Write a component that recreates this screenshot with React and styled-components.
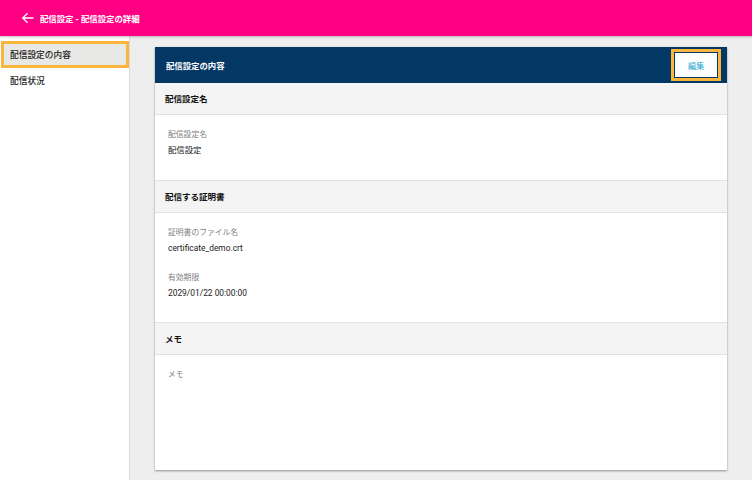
import React from "react";
import styled, { createGlobalStyle } from "styled-components";

const GlobalStyle = createGlobalStyle`
  html, body {
    margin: 0;
    padding: 0;
    height: 100%;
    overflow: hidden;
    background: #eeeeee;
    font-family: Roboto, "Noto Sans CJK JP", sans-serif;
  }
`;

const Page = styled.div`
  width: 752px;
  height: 480px;
  display: flex;
  flex-direction: column;
  overflow: hidden;
`;

const Header = styled.header`
  height: 36px;
  flex: none;
  box-sizing: border-box;
  display: flex;
  align-items: center;
  gap: 5px;
  padding: 0 0 1px 21px;
  background: #ff0084;
  box-shadow: 0 1px 2px rgba(0, 0, 0, 0.25);
  position: relative;
  color: #fff;
  font-size: 8.4px;
  font-weight: 700;
`;

const Body = styled.div`
  flex: 1;
  display: flex;
  min-height: 0;
`;

const Sidebar = styled.nav`
  width: 130px;
  flex: none;
  box-sizing: border-box;
  padding: 5px 0 0 1px;
  background: #fff;
  border-right: 1px solid #d9d9d9;
`;

const NavItem = styled.div`
  height: ${(p) => (p.$active ? "27px" : "25px")};
  box-sizing: border-box;
  display: flex;
  align-items: center;
  padding: 0 0 1px ${(p) => (p.$active ? "6px" : "9px")};
  font-size: 8.7px;
  font-weight: 500;
  color: #222;
  background: ${(p) => (p.$active ? "#e8e8e6" : "transparent")};
  border: ${(p) => (p.$active ? "3px solid #f9b53c" : "none")};
`;

const Main = styled.main`
  flex: 1;
  padding: 11px 25px 10px;
  min-width: 0;
`;

const Card = styled.div`
  height: 423px;
  display: flex;
  flex-direction: column;
  background: #fff;
  box-shadow: 0 1px 2px rgba(0, 0, 0, 0.4);
`;

const CardTitle = styled.div`
  height: 36px;
  flex: none;
  box-sizing: border-box;
  display: flex;
  align-items: center;
  justify-content: space-between;
  padding: 0 9px 0 11px;
  background: #033764;
  color: #fff;
  font-size: 8.4px;
  font-weight: 700;
`;

const EditButton = styled.button`
  width: 44px;
  height: 26px;
  box-sizing: border-box;
  padding: 0;
  background: #fff;
  border: 1px solid #033764;
  outline: 3px solid #f9b53c;
  color: #26a9d0;
  font-family: inherit;
  font-size: 8.4px;
`;

const SectionHeader = styled.div`
  height: 32px;
  flex: none;
  box-sizing: border-box;
  display: flex;
  align-items: center;
  padding: 0 0 2px 10px;
  background: #f4f4f4;
  border-bottom: 1px solid #e2e2e2;
  font-size: 8.5px;
  font-weight: 700;
  color: #111;
`;

const SectionBody = styled.div`
  height: ${(p) => p.$height}px;
  flex: none;
  box-sizing: border-box;
  padding: 14px 13px 0;
  border-bottom: 1px solid #e2e2e2;
  display: flex;
  flex-direction: column;
  gap: 18px;

  &:last-child {
    flex: 1;
    border-bottom: none;
  }
`;

const Field = styled.div`
  display: flex;
  flex-direction: column;
  gap: 5px;
`;

const Label = styled.div`
  font-size: 7.8px;
  line-height: 11px;
  color: #808080;
`;

const Value = styled.div`
  font-size: 8.4px;
  line-height: 11px;
  color: #222;
`;

const BackIcon = () => (
  <svg width="14" height="14" viewBox="0 0 14 14" fill="none" stroke="#fff" strokeWidth="1.4">
    <path d="M12.5 7H2M6.5 2.2 1.8 7l4.7 4.8" />
  </svg>
);

export default function App() {
  return (
    <Page>
      <GlobalStyle />
      <Header>
        <BackIcon />
        配信設定 - 配信設定の詳細
      </Header>
      <Body>
        <Sidebar>
          <NavItem $active>配信設定の内容</NavItem>
          <NavItem>配信状況</NavItem>
        </Sidebar>
        <Main>
          <Card>
            <CardTitle>
              配信設定の内容
              <EditButton>編集</EditButton>
            </CardTitle>
            <SectionHeader>配信設定名</SectionHeader>
            <SectionBody $height={66}>
              <Field>
                <Label>配信設定名</Label>
                <Value>配信設定</Value>
              </Field>
            </SectionBody>
            <SectionHeader>配信する証明書</SectionHeader>
            <SectionBody $height={110}>
              <Field>
                <Label>証明書のファイル名</Label>
                <Value>certificate_demo.crt</Value>
              </Field>
              <Field>
                <Label>有効期限</Label>
                <Value>2029/01/22 00:00:00</Value>
              </Field>
            </SectionBody>
            <SectionHeader>メモ</SectionHeader>
            <SectionBody $height={115}>
              <Field>
                <Label>メモ</Label>
              </Field>
            </SectionBody>
          </Card>
        </Main>
      </Body>
    </Page>
  );
}
